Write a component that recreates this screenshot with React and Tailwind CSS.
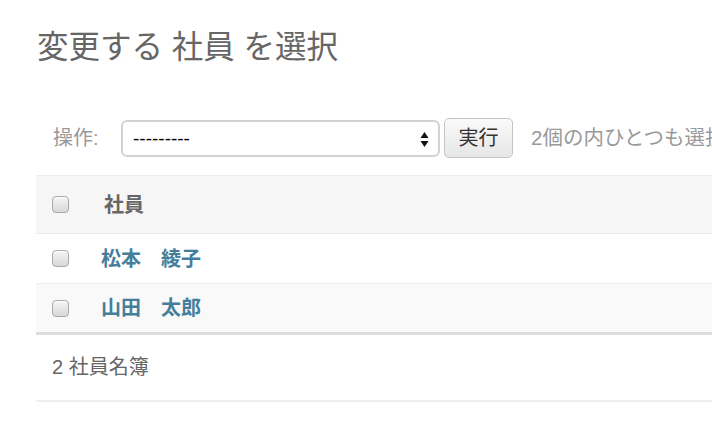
const Checkbox = () => (
    <span className="block w-[17px] h-[17px] shrink-0 rounded-[4px] border border-[#a9a9a9] bg-gradient-to-b from-[#f4f4f4] to-[#d9d9d9] shadow-[inset_0_1px_0_#fff]" />
);

const employees = ['松本　綾子', '山田　太郎'];

export default function App() {
    return (
        <div className="w-[712px] h-[430px] overflow-hidden bg-white font-['Liberation_Sans','Noto_Sans_CJK_JP',sans-serif]">
            <div className="w-[1000px] pl-[36px]">
                <h1 className="mt-[29px] pl-[1px] text-[31.5px] leading-[36px] text-[#666]">変更する 社員 を選択</h1>

                {/* action bar */}
                <div className="mt-[53px] h-[40px] flex items-center pl-[17px]">
                    <label className="text-[20px] text-[#999] w-[68px]">操作:</label>
                    <div className="relative w-[319px] h-[37px] rounded-[6px] border-2 border-[#d2d2d2] bg-white flex items-center pl-[10px]">
                        <span className="text-[19px] text-black leading-none">---------</span>
                        <svg className="absolute right-[9px] top-[9px]" width="9" height="17" viewBox="0 0 9 17">
                            <path d="M4.5 1 L8.5 7 L0.5 7 Z" fill="#111" />
                            <path d="M4.5 16 L8.5 10 L0.5 10 Z" fill="#111" />
                        </svg>
                    </div>
                    <button className="ml-[4px] w-[69px] h-[40px] rounded-[5px] border border-[#c4c4c4] bg-gradient-to-b from-[#fafafa] to-[#e6e6e6] text-[20px] text-[#333]">
                        実行
                    </button>
                    <span className="ml-[18px] text-[20.5px] text-[#999] whitespace-nowrap">2個の内ひとつも選択されていません</span>
                </div>

                {/* results table */}
                <div className="mt-[17px] border-t border-[#ececec]">
                    <div className="h-[58px] flex items-center bg-[#f6f6f6] border-b border-[#ececec] pl-[16px]">
                        <Checkbox />
                        <span className="ml-[35px] text-[20px] font-bold text-[#666]">社員</span>
                    </div>
                    {employees.map((name, i) => (
                        <div
                            key={name}
                            className={i === 0
                                ? 'h-[50px] flex items-center bg-white border-b border-[#ececec] pl-[16px]'
                                : 'h-[51px] flex items-center bg-[#f9f9f9] border-b-[3px] border-[#dedede] pl-[16px]'}
                        >
                            <Checkbox />
                            <a className="ml-[32px] text-[20px] font-bold text-[#447e9b] whitespace-pre">{name}</a>
                        </div>
                    ))}
                </div>

                <p className="pt-[20px] pb-[21px] pl-[16px] text-[20px] leading-[24px] text-[#666] border-b-2 border-[#eee]">2 社員名簿</p>
            </div>
        </div>
    );
}
